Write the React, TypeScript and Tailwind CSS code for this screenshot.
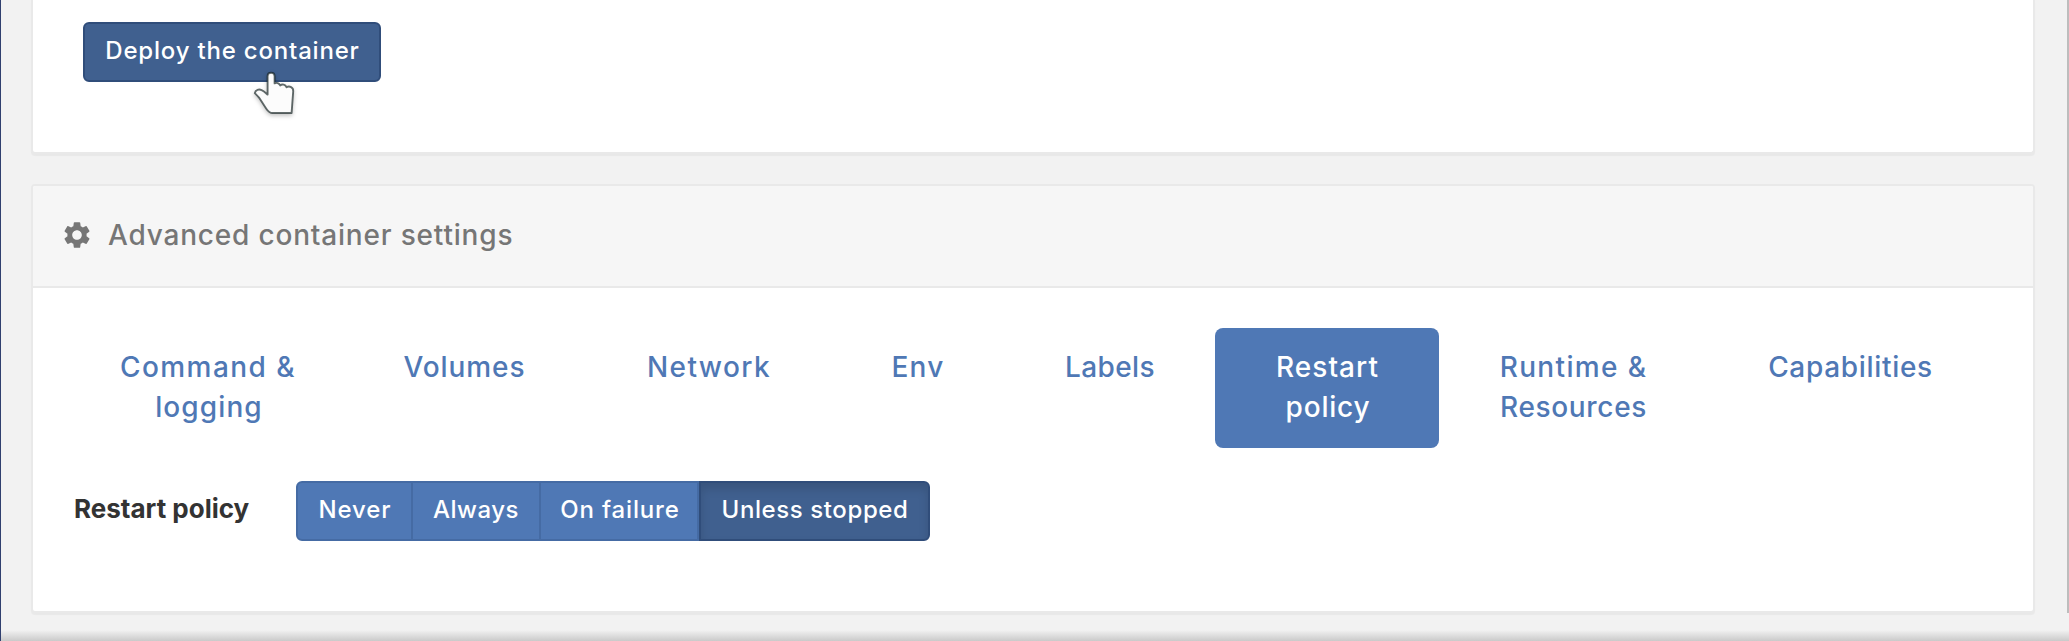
import { MdSettings } from "react-icons/md";

type Line = { text: string; spacing: string };
type Tab = { lines: Line[]; box: string; active?: boolean };
type Policy = { text: string; box: string; active?: boolean };

const tabs: Tab[] = [
  {
    lines: [
      { text: "Command &", spacing: "tracking-[1.46px]" },
      { text: "logging", spacing: "tracking-[1.1px] pl-[2px]" },
    ],
    box: "w-[266px]",
  },
  { lines: [{ text: "Volumes", spacing: "tracking-[0.92px] pl-[1px]" }], box: "w-[246px]" },
  { lines: [{ text: "Network", spacing: "tracking-[1.4px] pl-[1px]" }], box: "w-[243px]" },
  { lines: [{ text: "Env", spacing: "tracking-[1.2px] pl-[1px]" }], box: "w-[175px]" },
  { lines: [{ text: "Labels", spacing: "tracking-[0.4px]" }], box: "w-[210px]" },
  {
    lines: [
      { text: "Restart", spacing: "tracking-[1.05px] pl-[1px]" },
      { text: "policy", spacing: "tracking-[0.8px] pl-[2px]" },
    ],
    box: "w-[224px]",
    active: true,
  },
  {
    lines: [
      { text: "Runtime &", spacing: "tracking-[1.35px]" },
      { text: "Resources", spacing: "tracking-[0.66px]" },
    ],
    box: "w-[269px]",
  },
  { lines: [{ text: "Capabilities", spacing: "tracking-[0.68px]" }], box: "w-[285px]" },
];

const policies: Policy[] = [
  { text: "Never", box: "w-[117px] rounded-l-[6px] border-l-2 pl-[1px] tracking-[0.85px]" },
  { text: "Always", box: "w-[128px] tracking-[0.5px]" },
  { text: "On failure", box: "w-[158px] border-r-0 pl-[2px] tracking-[0.85px]" },
  { text: "Unless stopped", box: "w-[231px] rounded-r-[6px] border-l-2 pl-[1px] tracking-[0.6px]", active: true },
];

function HandCursor() {
  return (
    <svg
      className="absolute left-[166px] top-[46px] h-[50px] w-[50px] overflow-visible drop-shadow-[0_2px_2px_rgba(0,0,0,0.25)]"
      viewBox="249 68 50 50"
      fill="none"
    >
      <path
        d="M267.6 94.6V76C267.6 71.6 274.6 71.6 274.6 76V83.4C276.6 82.4 279 82.8 280.2 85.4C282.4 83.6 285.2 84.6 286.6 87.2C289.4 85.6 293.5 87.2 293.2 91.2L291.6 113H272.6C269.5 113 267.8 110.9 266.3 108.7L259 97.6C257.8 96 256.4 94.8 254.8 93.2C255.4 89.4 259.2 89 261.6 90.1C264 91.2 265.8 93 267.6 94.6Z"
        fill="#fcfcfc"
        stroke="rgb(20 33 33 / 0.66)"
        strokeWidth="1.9"
        strokeLinejoin="round"
      />
    </svg>
  );
}

export default function App() {
  return (
    <div className="relative flex h-[641px] w-full flex-col overflow-hidden border-l border-[#30406f] bg-[#f2f2f2] pl-[30px] pr-[34px] font-['Inter',sans-serif] font-medium">
      <section className="h-[154px] shrink-0 rounded-b-[4px] border-2 border-t-0 border-[#e9e9e9] bg-white pl-[50px] pt-[22px] shadow-[0_2px_1px_rgba(0,0,0,0.04)]">
        <div className="relative w-[298px]">
          <button className="block h-[60px] w-[298px] rounded-[6px] border-2 border-[#304d7a] bg-[#40608f] pb-[3px] pl-[1px] text-[24px] leading-[34px] tracking-[0.81px] text-white">
            Deploy the container
          </button>
          <HandCursor />
        </div>
      </section>

      <section className="mt-[30px] h-[429px] shrink-0 rounded-[4px] border-2 border-[#e9e9e9] bg-white shadow-[0_2px_1px_rgba(0,0,0,0.04)]">
        <header className="flex h-[102px] items-center rounded-t-[2px] border-b-2 border-[#e9e9e9] bg-[#f6f6f6] pl-[28px] text-[28px] leading-[40px] text-[#767676]">
          <MdSettings className="mb-[3px] size-[32px]" />
          <h2 className="ml-[15px] pb-[2px] tracking-[0.81px]">Advanced container settings</h2>
        </header>

        <nav className="mt-[40px] flex h-[120px] pl-[42px] text-center text-[28px] leading-[40px]">
          {tabs.map((t) => (
            <a
              key={t.lines[0].text}
              className={`block shrink-0 rounded-[8px] pt-[19px] ${t.box} ${t.active ? "bg-[#4f78b5] text-white" : "text-[#4f78b5]"}`}
            >
              {t.lines.map((l) => (
                <span key={l.text} className={`block ${l.spacing}`}>{l.text}</span>
              ))}
            </a>
          ))}
        </nav>

        <div className="mt-[33px] flex h-[60px] items-center pl-[41px] text-[24px] leading-[34px]">
          <label className="w-[222px] pb-[4px] text-[26px] font-bold text-[#333]">Restart policy</label>
          <div className="flex h-[60px]">
            {policies.map((p) => (
              <button
                key={p.text}
                className={`h-[60px] shrink-0 whitespace-nowrap border-y-2 border-r-2 pb-[3px] text-white ${p.box} ${
                  p.active
                    ? "border-[#304d7a] bg-[#40608f] shadow-[inset_0_6px_10px_rgba(0,0,0,0.125)]"
                    : "border-[#456ba4] bg-[#4f78b5]"
                }`}
              >
                {p.text}
              </button>
            ))}
          </div>
        </div>
      </section>

      <div className="absolute right-0 top-0 h-[613px] w-[2px] bg-[#bdbdbd]" />
      <div className="absolute bottom-0 left-0 h-[11px] w-full bg-linear-to-b from-[#f2f2f2] to-[#cacaca]" />
    </div>
  );
}
